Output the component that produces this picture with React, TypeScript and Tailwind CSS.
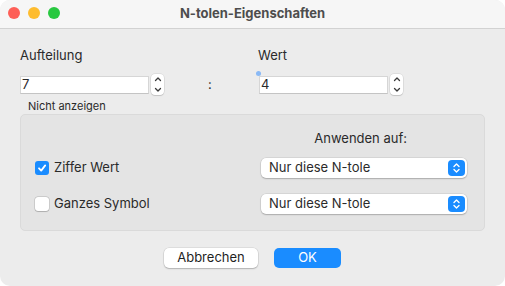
import React from "react";

function Stepper() {
  return (
    <div className="flex h-[21px] w-[13px] flex-col items-center justify-between rounded-[4px] bg-white py-[2px] shadow-[0_0_0_0.5px_rgba(0,0,0,0.12),0_1px_1px_rgba(0,0,0,0.12)]">
      <svg width="8" height="6" viewBox="0 0 8 6" fill="none">
        <path d="M1.5 4.5L4 2L6.5 4.5" stroke="#3a3a3a" strokeWidth="1.3" strokeLinecap="round" strokeLinejoin="round" />
      </svg>
      <svg width="8" height="6" viewBox="0 0 8 6" fill="none">
        <path d="M1.5 1.5L4 4L6.5 1.5" stroke="#3a3a3a" strokeWidth="1.3" strokeLinecap="round" strokeLinejoin="round" />
      </svg>
    </div>
  );
}

function NumberField({ value }: { value: string }) {
  return (
    <div className="flex items-center gap-[2px]">
      <div className="flex h-[18px] w-[129px] items-center border border-[#d6d6d6] border-b-[#c4c4c4] bg-white pl-[1px] text-[13px] leading-none text-[#2a2a2a]">
        {value}
      </div>
      <Stepper />
    </div>
  );
}

function Select({ label }: { label: string }) {
  return (
    <div className="flex h-[20px] w-[206px] items-center justify-between rounded-[5px] bg-white pl-[8px] pr-[2px] text-[13px] text-[#2a2a2a] shadow-[0_0_0_0.5px_rgba(0,0,0,0.12),0_1px_1.5px_rgba(0,0,0,0.2)]">
      <span>{label}</span>
      <div className="flex h-[16px] w-[17px] items-center justify-center rounded-[4px] bg-[#1a8cff]">
        <svg width="9" height="12" viewBox="0 0 9 12" fill="none">
          <path d="M2 4.5L4.5 2L7 4.5M2 7.5L4.5 10L7 7.5" stroke="white" strokeWidth="1.4" strokeLinecap="round" strokeLinejoin="round" />
        </svg>
      </div>
    </div>
  );
}

function Checkbox({ checked, label }: { checked: boolean; label: string }) {
  return (
    <div className="flex items-center gap-[5px]">
      {checked ? (
        <div className="flex h-[14px] w-[14px] items-center justify-center rounded-[3px] bg-[#1a8cff]">
          <svg width="10" height="10" viewBox="0 0 10 10" fill="none">
            <path d="M2 5.3L4.2 7.6L8.2 2.4" stroke="white" strokeWidth="1.8" strokeLinecap="round" strokeLinejoin="round" />
          </svg>
        </div>
      ) : (
        <div className="h-[14px] w-[14px] rounded-[3px] bg-white shadow-[0_0_0_0.5px_rgba(0,0,0,0.2),0_0.5px_1px_rgba(0,0,0,0.15)]" />
      )}
      <span className="text-[13px] text-[#2a2a2a]">{label}</span>
    </div>
  );
}

export default function App() {
  return (
    <div className="h-[286px] w-[505px] bg-white" style={{ fontFamily: "Inter, 'Liberation Sans', sans-serif" }}>
      <div className="flex h-full w-full flex-col overflow-hidden rounded-[10px] bg-[#ececec]">
        {/* Title bar */}
        <div className="relative flex h-[29px] items-center justify-center border-b border-[#d2d2d2] bg-[#f6f6f6]">
          <div className="absolute left-[8px] top-[7px] flex gap-[8px]">
            <div className="h-[12px] w-[12px] rounded-full bg-[#fe5f57]" />
            <div className="h-[12px] w-[12px] rounded-full bg-[#febc2e]" />
            <div className="h-[12px] w-[12px] rounded-full bg-[#28c840]" />
          </div>
          <span className="text-[13px] font-bold text-[#4d4d4d]">N-tolen-Eigenschaften</span>
        </div>

        {/* Body */}
        <div className="flex flex-col px-[20px] pt-[18px]">
          <div className="flex">
            <div className="flex w-[238px] flex-col">
              <span className="text-[13px] leading-[16px] text-[#2a2a2a]">Aufteilung</span>
              <div className="mt-[11px] flex items-center">
                <NumberField value="7" />
                <span className="ml-[44px] text-[13px] text-[#2a2a2a]">:</span>
              </div>
            </div>
            <div className="relative flex flex-col">
              <span className="text-[13px] leading-[16px] text-[#2a2a2a]">Wert</span>
              <div className="mt-[11px] pl-[1px]">
                <NumberField value="4" />
              </div>
              <div className="absolute left-[-2px] top-[24px] h-[5px] w-[5px] rounded-full bg-[#8ab9f5]" />
            </div>
          </div>

          <span className="ml-[8px] mt-[4px] text-[11px] leading-[14px] text-[#2a2a2a]">Nicht anzeigen</span>

          <div className="mt-[1px] flex h-[117px] w-[465px] flex-col rounded-[5px] border border-[#dadada] bg-[#e4e4e4] pl-[14px] pr-[17px] pt-[15px]">
            <div className="flex justify-end pr-[60px]">
              <span className="text-[13px] leading-[16px] text-[#2a2a2a]">Anwenden auf:</span>
            </div>
            <div className="mt-[12px] flex items-center justify-between">
              <Checkbox checked label="Ziffer Wert" />
              <Select label="Nur diese N-tole" />
            </div>
            <div className="mt-[16px] flex items-center justify-between">
              <Checkbox checked={false} label="Ganzes Symbol" />
              <Select label="Nur diese N-tole" />
            </div>
          </div>

          <div className="mt-[17px] flex justify-center gap-[16px]">
            <button className="h-[20px] w-[94px] rounded-[5px] bg-white text-[13px] text-[#1f1f1f] shadow-[0_0_0_0.5px_rgba(0,0,0,0.12),0_1px_1.5px_rgba(0,0,0,0.2)]">
              Abbrechen
            </button>
            <button className="h-[20px] w-[67px] rounded-[5px] bg-[#1a8cff] text-[13px] text-white">
              OK
            </button>
          </div>
        </div>
      </div>
    </div>
  );
}
